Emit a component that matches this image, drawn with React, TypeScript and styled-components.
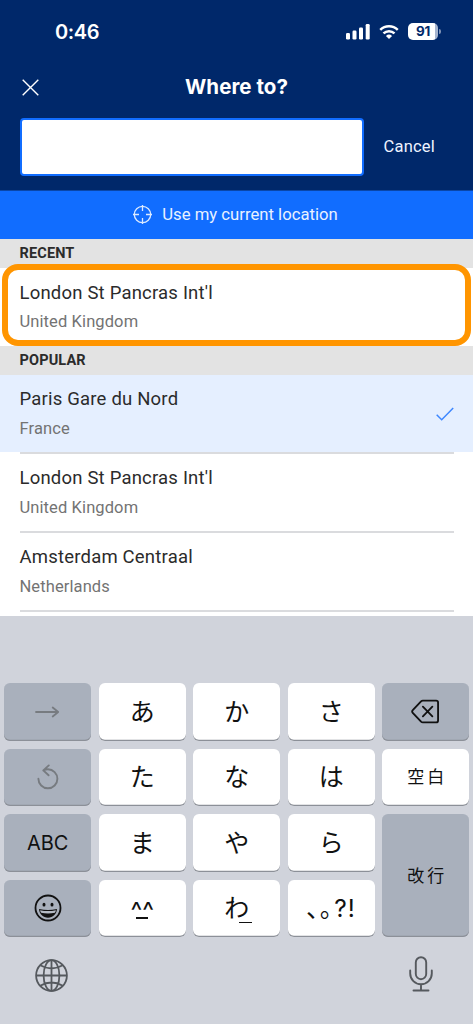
import React from "react";
import styled, { createGlobalStyle } from "styled-components";

const GlobalStyle = createGlobalStyle`
  * { box-sizing: border-box; }
  body { margin: 0; background: #d0d3db; }
`;

const Screen = styled.main`
  width: 473px;
  height: 1024px;
  display: flex;
  flex-direction: column;
  overflow: hidden;
  background: #fff;
  font-family: Roboto, "Liberation Sans", sans-serif;
  color: #2b2b2b;
`;

const Header = styled.header`
  height: 191px;
  flex: none;
  background: #00286a;
  border-bottom: 1px solid #0a46a8;
  color: #fff;
`;

const StatusBar = styled.div`
  height: 62px;
  padding: 1px 32px 0 55px;
  display: flex;
  align-items: center;
  justify-content: space-between;
`;

const Clock = styled.span`
  font: 600 20px/24px Inter, sans-serif;
  letter-spacing: -0.35px;
`;

const StatusIcons = styled.div`
  display: flex;
  align-items: center;
  gap: 9px;
  svg { display: block; }
`;

const Battery = styled.div`
  display: flex;
  align-items: center;
  gap: 1px;
`;

const BatteryBody = styled.span`
  width: 30px;
  height: 17px;
  border-radius: 5px;
  background: linear-gradient(to right, #fff 91%, #a6b5cf 91%);
  color: #00286a;
  font: 700 13.5px/17px Inter, sans-serif;
  letter-spacing: -0.4px;
  text-align: center;
`;

const BatteryTip = styled.span`
  width: 2px;
  height: 5px;
  border-radius: 0 2px 2px 0;
  background: #8093b5;
`;

const TitleBar = styled.div`
  height: 50px;
  padding: 0 22px;
  display: grid;
  grid-template-columns: 17px 1fr 17px;
  align-items: center;
  svg { display: block; }
`;

const Title = styled.h1`
  margin: 0;
  text-align: center;
  font: 700 20.5px/26px Inter, sans-serif;
  letter-spacing: 0.05px;
`;

const SearchRow = styled.div`
  padding: 6px 38px 0 20px;
  display: flex;
  align-items: center;
  justify-content: space-between;
`;

const SearchInput = styled.input`
  width: 343.5px;
  height: 57.5px;
  padding: 0 14px;
  border: 2px solid #116dff;
  border-radius: 4px;
  background: #fff;
  font-size: 18px;
  outline: none;
`;

const CancelButton = styled.button`
  border: 0;
  padding: 0;
  background: none;
  color: #eef3ff;
  font: 400 16.5px/20px Roboto, sans-serif;
  letter-spacing: 0.2px;
`;

const LocationButton = styled.button`
  height: 48px;
  flex: none;
  border: 0;
  padding: 0 2px 1px 0;
  display: flex;
  align-items: center;
  justify-content: center;
  gap: 10px;
  background: #116dff;
  color: #e8f1ff;
  font: 400 16.7px/20px Roboto, sans-serif;
`;

const SectionTitle = styled.h2`
  height: 29px;
  flex: none;
  margin: 0;
  padding-left: 19.5px;
  background: #e3e3e3;
  font: 700 14.5px/30px Roboto, sans-serif;
  letter-spacing: 0.15px;
`;

const Station = styled.div<{ $selected?: boolean; $recent?: boolean }>`
  position: relative;
  height: ${(p) => (p.$recent ? 78 : 79)}px;
  flex: none;
  padding: 0 19.5px;
  display: flex;
  background: ${(p) => (p.$selected ? "linear-gradient(#e5efff 77.5px, #fff 77.5px)" : "#fff")};
`;

const StationContent = styled.div<{ $line?: boolean }>`
  flex: 1;
  padding-top: ${(p) => (p.$line ? 12 : 13)}px;
  display: flex;
  justify-content: space-between;
  border-bottom: ${(p) => (p.$line ? "2px solid #dadbde" : "0")};
  svg { margin: 20px 0 0; }
`;

const StationName = styled.div`
  font-size: 18.5px;
  line-height: 24px;
  letter-spacing: 0.2px;
`;

const Country = styled.div<{ $recent?: boolean }>`
  margin-top: ${(p) => (p.$recent ? 6 : 7)}px;
  color: #737373;
  font-size: 16.5px;
  line-height: 22px;
  letter-spacing: 0.1px;
`;

const Highlight = styled.div`
  position: absolute;
  inset: -3.7px 2.4px 0.3px 2px;
  border: 6.3px solid #ff9500;
  border-radius: 16px;
  z-index: 1;
`;

const Spacer = styled.div`
  height: 4px;
  flex: none;
`;

const Keyboard = styled.section`
  flex: 1;
  padding: 67px 3.5px 0 4px;
  background: #d0d3db;
  color: #111;
`;

const Keys = styled.div`
  display: grid;
  grid-template-columns: repeat(5, 1fr);
  grid-auto-rows: 57.5px;
  gap: 8px 7.2px;
`;

const Key = styled.button<{ $dark?: boolean; $tall?: boolean; $size?: number; $spacing?: number }>`
  ${(p) => (p.$tall ? "grid-row: span 2;" : "")}
  border: 0;
  padding: 0 0 0 ${(p) => p.$spacing ?? 0}px;
  border-radius: 6px;
  display: flex;
  align-items: center;
  justify-content: center;
  background: ${(p) => (p.$dark ? "#a9b0bc" : "#fff")};
  box-shadow: inset 0 -1.2px 0 #8c9098;
  color: #111;
  font: 400 ${(p) => p.$size ?? 25}px/30px Inter, "Noto Sans CJK JP", sans-serif;
  letter-spacing: ${(p) => p.$spacing ?? 0}px;
  svg { display: block; }
`;

const Face = styled.span`
  display: flex;
  flex-direction: column;
  align-items: center;
  &::after { content: ""; width: 12px; height: 2px; background: #111; }
`;

const Carets = styled.span`
  height: 20px;
  font: 400 25px/28px Inter, sans-serif;
`;

const WaKey = styled.span`
  position: relative;
  &::after {
    content: "";
    position: absolute;
    left: 15px;
    bottom: 0;
    width: 13px;
    height: 1.5px;
    background: #111;
  }
`;

const Punctuation = styled.span`
  display: flex;
  align-items: center;
  gap: 1px;
  font-size: 24.5px;
  letter-spacing: 1px;
`;

const KeyboardFooter = styled.div`
  padding: 19px 40px 0 35px;
  display: flex;
  justify-content: space-between;
  align-items: flex-start;
  svg:first-child { margin: 3px 0 0 -4px; }
  svg:last-child { margin-right: -3px; }
`;

const SignalIcon = () => (
  <svg width="24" height="16" viewBox="0 0 24 16" fill="#fff">
    <rect x="0" y="9" width="4" height="6.5" rx="1.2" />
    <rect x="6.5" y="6.5" width="4" height="9" rx="1.2" />
    <rect x="13" y="3.5" width="4" height="12" rx="1.2" />
    <rect x="19.7" y="0" width="4" height="15.5" rx="1.2" />
  </svg>
);

const WifiIcon = () => (
  <svg width="20" height="16" viewBox="0 0 21 16" fill="none" stroke="#fff" strokeWidth="2.6">
    <path d="M1.3 5.8a13.2 13.2 0 0 1 18.4 0" />
    <path d="M4.7 9.5a8.4 8.4 0 0 1 11.6 0" />
    <path d="M7.3 12.1a4.7 4.7 0 0 1 6.4 0L10.5 15.4z" fill="#fff" stroke="none" />
  </svg>
);

const CloseIcon = () => (
  <svg width="17" height="17" viewBox="0 0 17 17" stroke="#fff" strokeWidth="1.4">
    <path d="M.7.7l15.6 15.6M16.3.7L.7 16.3" />
  </svg>
);

const TargetIcon = () => (
  <svg width="19" height="19" viewBox="0 0 19 19" fill="none" stroke="#dceaff" strokeWidth="1.3">
    <circle cx="9.5" cy="9.5" r="8.2" />
    <path d="M9.5 0v6M9.5 13v6M0 9.5h6M13 9.5h6" />
  </svg>
);

const CheckIcon = () => (
  <svg width="18" height="14" viewBox="0 0 18 14" fill="none" stroke="#3d87ff" strokeWidth="1.5">
    <path d="M.7 7.7l5 5L17.2 1" />
  </svg>
);

const ArrowIcon = () => (
  <svg width="25" height="12" viewBox="0 0 25 12" fill="none" stroke="#777b80" strokeWidth="1.8" strokeLinecap="round" strokeLinejoin="round">
    <path d="M1 6h22M17.7 1.5L23.2 6l-5.5 4.5" />
  </svg>
);

const UndoIcon = () => (
  <svg width="22" height="26" viewBox="0 0 22 26" fill="none" stroke="#777b80" strokeWidth="1.9" strokeLinecap="round" strokeLinejoin="round">
    <path d="M1.4 14.8a9.5 9.5 0 1 0 9.5-9.5Q9 5.3 6.3 6.4M11.8 1.4L6.3 6.4l5.3 4.9" />
  </svg>
);

const DeleteIcon = () => (
  <svg width="29" height="25" viewBox="0 0 30 25" fill="none" stroke="#111" strokeWidth="1.9" strokeLinecap="round" strokeLinejoin="round">
    <path d="M12.2 1.2H26q2 0 2 2v18.6q0 2-2 2H12.2q-1 0-1.8-.8l-8.6-9.2q-1.3-1.3 0-2.6l8.6-9.2q.8-.8 1.8-.8zM12.3 7.5l9.8 10M22.1 7.5l-9.8 10" />
  </svg>
);

const SmileIcon = () => (
  <svg width="28" height="28" viewBox="0 0 28 28" fill="none" stroke="#111" strokeWidth="1.8">
    <circle cx="14" cy="14" r="12.5" />
    <ellipse cx="10" cy="10.7" rx="1.5" ry="1.9" fill="#111" stroke="none" />
    <ellipse cx="18" cy="10.7" rx="1.5" ry="1.9" fill="#111" stroke="none" />
    <path d="M5 15q9 2 18 0c-.5 5.4-4.1 8.7-9 8.7S5.500 20.400 5 15z" fill="#111" stroke="none" />
    <path d="M6.100 16.200q7.900 1.700 15.800 0-.3 1.700-1 2.600-6.900 1.500-13.800 0-.7-.9-1-2.600z" fill="#b5bbc5" stroke="none" />
  </svg>
);

const GlobeIcon = () => (
  <svg width="33" height="33" viewBox="0 0 33 33" fill="none" stroke="#55595e" strokeWidth="1.8">
    <circle cx="16.5" cy="16.5" r="15.4" />
    <ellipse cx="16.5" cy="16.5" rx="7.9" ry="15.4" />
    <path d="M16.5 1v31M1 16.5h31M5.2 6.3q11.300 6.400 22.600 0M5.200 26.700q11.300-6.400 22.600 0" />
  </svg>
);

const MicIcon = () => (
  <svg width="24" height="36" viewBox="0 0 24 36" fill="none" stroke="#55595e" strokeWidth="1.9" strokeLinecap="round">
    <rect x="6.800" y="1.200" width="10.400" height="22" rx="5.200" />
    <path d="M1.200 14.500v3a10.800 10.800 0 0 0 21.600 0v-3M12 28.400v6M4.500 34.500h15" />
  </svg>
);

interface StationRowProps {
  name: string;
  country: string;
  selected?: boolean;
  recent?: boolean;
}

const StationRow = ({ name, country, selected, recent }: StationRowProps) => (
  <Station $selected={selected} $recent={recent}>
    <StationContent $line={!recent}>
      <div>
        <StationName>{name}</StationName>
        <Country $recent={recent}>{country}</Country>
      </div>
      {selected && <CheckIcon />}
    </StationContent>
    {recent && <Highlight />}
  </Station>
);

export default function App() {
  return (
    <Screen>
      <GlobalStyle />
      <Header>
        <StatusBar>
          <Clock>0:46</Clock>
          <StatusIcons>
            <SignalIcon />
            <WifiIcon />
            <Battery>
              <BatteryBody>91</BatteryBody>
              <BatteryTip />
            </Battery>
          </StatusIcons>
        </StatusBar>
        <TitleBar>
          <CloseIcon />
          <Title>Where to?</Title>
        </TitleBar>
        <SearchRow>
          <SearchInput aria-label="Destination" />
          <CancelButton>Cancel</CancelButton>
        </SearchRow>
      </Header>
      <LocationButton>
        <TargetIcon />
        <span>Use my current location</span>
      </LocationButton>
      <SectionTitle>RECENT</SectionTitle>
      <StationRow recent name="London St Pancras Int'l" country="United Kingdom" />
      <SectionTitle>POPULAR</SectionTitle>
      <StationRow selected name="Paris Gare du Nord" country="France" />
      <StationRow name="London St Pancras Int'l" country="United Kingdom" />
      <StationRow name="Amsterdam Centraal" country="Netherlands" />
      <Spacer />
      <Keyboard>
        <Keys>
          <Key $dark><ArrowIcon /></Key>
          <Key>あ</Key>
          <Key>か</Key>
          <Key>さ</Key>
          <Key $dark><DeleteIcon /></Key>
          <Key $dark><UndoIcon /></Key>
          <Key>た</Key>
          <Key>な</Key>
          <Key>は</Key>
          <Key $size={17} $spacing={3}>空白</Key>
          <Key $dark $size={20}>ABC</Key>
          <Key>ま</Key>
          <Key>や</Key>
          <Key>ら</Key>
          <Key $dark $tall $size={17} $spacing={3}>改行</Key>
          <Key $dark><SmileIcon /></Key>
          <Key><Face><Carets>^^</Carets></Face></Key>
          <Key><WaKey>わ</WaKey></Key>
          <Key><Punctuation><span>､｡</span>?!</Punctuation></Key>
        </Keys>
        <KeyboardFooter>
          <GlobeIcon />
          <MicIcon />
        </KeyboardFooter>
      </Keyboard>
    </Screen>
  );
}
